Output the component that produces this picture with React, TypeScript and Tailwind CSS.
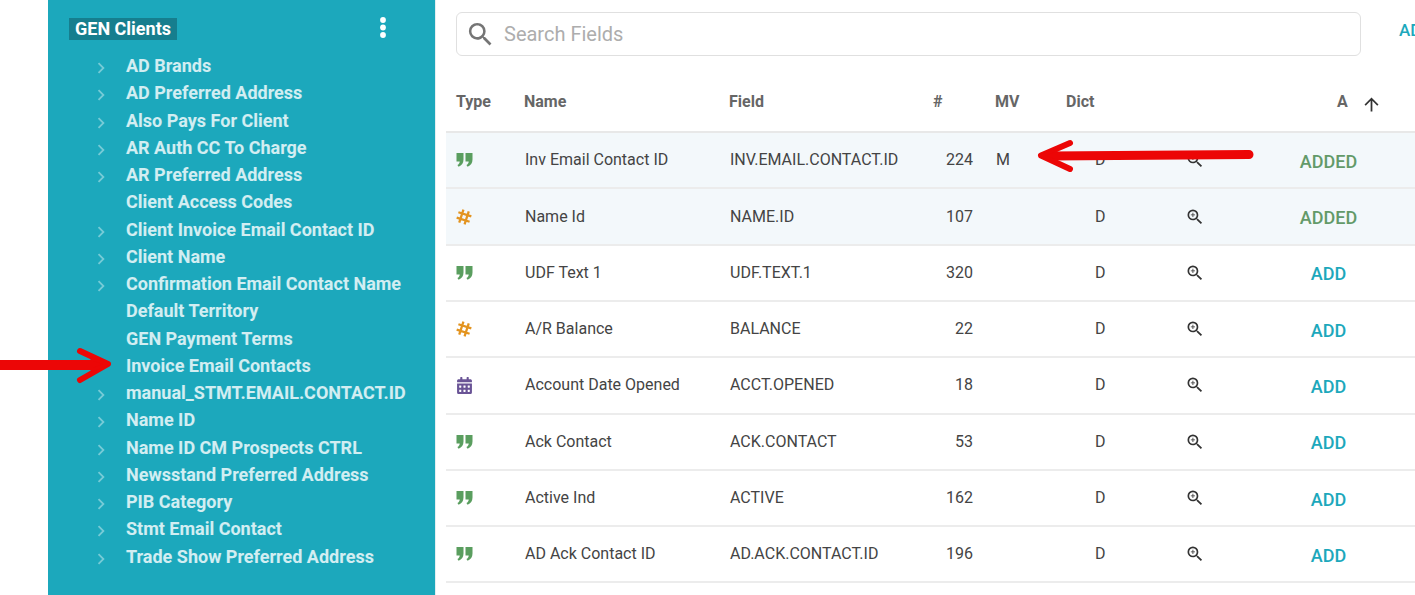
import { MdArrowUpward, MdChevronRight, MdSearch, MdZoomIn } from "react-icons/md"
import { FaCalendarAlt } from "react-icons/fa"

type FieldType = "text" | "number" | "date"

interface Row {
  type: FieldType
  name: string
  field: string
  num: number
  mv?: string
  added?: boolean
}

const clients: { label: string; expandable: boolean }[] = [
  { label: "AD Brands", expandable: true },
  { label: "AD Preferred Address", expandable: true },
  { label: "Also Pays For Client", expandable: true },
  { label: "AR Auth CC To Charge", expandable: true },
  { label: "AR Preferred Address", expandable: true },
  { label: "Client Access Codes", expandable: false },
  { label: "Client Invoice Email Contact ID", expandable: true },
  { label: "Client Name", expandable: true },
  { label: "Confirmation Email Contact Name", expandable: true },
  { label: "Default Territory", expandable: false },
  { label: "GEN Payment Terms", expandable: false },
  { label: "Invoice Email Contacts", expandable: false },
  { label: "manual_STMT.EMAIL.CONTACT.ID", expandable: true },
  { label: "Name ID", expandable: true },
  { label: "Name ID CM Prospects CTRL", expandable: true },
  { label: "Newsstand Preferred Address", expandable: true },
  { label: "PIB Category", expandable: true },
  { label: "Stmt Email Contact", expandable: true },
  { label: "Trade Show Preferred Address", expandable: true },
]

const rows: Row[] = [
  { type: "text", name: "Inv Email Contact ID", field: "INV.EMAIL.CONTACT.ID", num: 224, mv: "M", added: true },
  { type: "number", name: "Name Id", field: "NAME.ID", num: 107, added: true },
  { type: "text", name: "UDF Text 1", field: "UDF.TEXT.1", num: 320 },
  { type: "number", name: "A/R Balance", field: "BALANCE", num: 22 },
  { type: "date", name: "Account Date Opened", field: "ACCT.OPENED", num: 18 },
  { type: "text", name: "Ack Contact", field: "ACK.CONTACT", num: 53 },
  { type: "text", name: "Active Ind", field: "ACTIVE", num: 162 },
  { type: "text", name: "AD Ack Contact ID", field: "AD.ACK.CONTACT.ID", num: 196 },
]

const columns = "grid-cols-[69px_205px_203px_62px_71px_119px_83px_121px]"

function QuoteIcon() {
  return (
    <svg width="17" height="14" viewBox="0 0 17 14" className="text-[#5a9e5f]" fill="currentColor">
      <path d="M0.5 0h7v6.6C7.5 10 5.8 12.6 2.6 13.8L1.4 12c1.5-.8 2.2-2 2.3-3.6H.5z" />
      <path d="M9.5 0h7v6.6c0 3.4-1.7 6-4.9 7.2L10.4 12c1.5-.8 2.2-2 2.3-3.6H9.5z" />
    </svg>
  )
}

function HashIcon() {
  return (
    <svg width="16" height="16" viewBox="0 0 16 16" className="text-[#e39420]" fill="none" stroke="currentColor" strokeWidth="2.3">
      <g transform="rotate(18 8 8)">
        <path d="M5.2 1.2v13.6M10.8 1.2v13.6M1.2 5.2h13.6M1.2 10.8h13.6" />
      </g>
    </svg>
  )
}

function TypeIcon({ type }: { type: FieldType }) {
  if (type === "text") return <QuoteIcon />
  if (type === "number") return <HashIcon />
  return <FaCalendarAlt className="text-[#6a5496] text-[17px]" />
}

export default function App() {
  return (
    <div className="relative flex h-[595px] w-[1415px] overflow-hidden bg-white font-['Roboto',sans-serif]">
      <aside className="ml-12 w-[388px] shrink-0 bg-[#1ca8bc] border-r border-[#e3eef1]">
        <div className="flex h-[52px] items-start justify-between pl-[21px] pr-[49px] pt-[18px]">
          <span className="h-[22px] bg-[#167e8e] px-[6px] text-[18px] leading-[22px] font-bold text-white">GEN Clients</span>
          <svg width="6" height="22" viewBox="0 0 6 22" className="-mt-[1px] text-white" fill="currentColor">
            <circle cx="3" cy="3" r="2.9" />
            <circle cx="3" cy="10.5" r="2.9" />
            <circle cx="3" cy="18" r="2.9" />
          </svg>
        </div>
        <ul>
          {clients.map((c) => (
            <li key={c.label} className="flex h-[27.25px] items-center">
              <span className="flex w-[78px] shrink-0 justify-end pr-[14px] pt-[5px]">
                {c.expandable && <MdChevronRight className="text-[22px] text-white/40" />}
              </span>
              <span className="text-[18px] font-bold whitespace-nowrap text-white/80">{c.label}</span>
            </li>
          ))}
        </ul>
      </aside>

      <main className="flex-1 min-w-0 pl-[10px]">
        <div className="flex h-[76px] items-start pl-[10px] pt-3">
          <div className="flex h-11 w-[905px] shrink-0 items-center rounded-md border border-[#e0e0e0] pl-[8px]">
            <MdSearch className="text-[31px] text-[#757575]" />
            <span className="ml-[8px] text-[20px] text-[#adadad]">Search Fields</span>
          </div>
          <span className="ml-[38px] pt-[6px] text-[17px] font-medium text-[#1ca8bc]">ADD</span>
        </div>

        <div className={`grid h-[57.1px] ${columns} items-center border-b-2 border-[#e8e8e8] pb-[4px] pl-[10px] text-[16px] font-bold text-[#666]`}>
          <span>Type</span>
          <span className="-ml-px">Name</span>
          <span className="-ml-px">Field</span>
          <span>#</span>
          <span>MV</span>
          <span>Dict</span>
          <span />
          <span className="flex items-center pl-[69px]">
            A
            <MdArrowUpward className="ml-[13px] mt-[6px] shrink-0 text-[21px] text-[#333]" />
          </span>
        </div>

        {rows.map((r) => (
          <div
            key={r.field}
            className={`grid h-[56.3px] ${columns} items-center border-b-2 border-[#ececec] pl-[10px] text-[16px] text-[#444] ${
              r.added ? "bg-[#f3f8fb]" : "bg-white"
            }`}
          >
            <span className="flex items-center">
              <TypeIcon type={r.type} />
            </span>
            <span>{r.name}</span>
            <span>{r.field}</span>
            <span className="pr-[22px] text-right">{r.num}</span>
            <span className="pl-px">{r.mv}</span>
            <span className="pl-[29px]">D</span>
            <span className="flex">
              <MdZoomIn className="text-[20px] text-[#333]" />
            </span>
            <span
              className={`pt-[2px] text-center text-[18px] font-medium ${r.added ? "text-[#639a69]" : "text-[#1ca8bc]"}`}
            >
              {r.added ? "ADDED" : "ADD"}
            </span>
          </div>
        ))}
      </main>

      {/* annotation arrows pasted over the screenshot */}
      <svg className="absolute left-0 top-0 pointer-events-none" width="1415" height="595" fill="none" stroke="#ec0606" strokeLinecap="round" strokeLinejoin="round">
        <path d="M1249 154.5 L1050 156" strokeWidth="9" />
        <path d="M1070 143 L1041 155.5 L1070 169" strokeWidth="6" />
        <path d="M1041 155.5 L1056 150 L1056 161 Z" strokeWidth="3" fill="#ec0606" />
        <path d="M0 365 L100 365" strokeWidth="10" strokeLinecap="butt" />
        <path d="M80 351 L108 364 L80 380" strokeWidth="6" />
        <path d="M108 364 L92 359 L92 370 Z" strokeWidth="3" fill="#ec0606" />
      </svg>
    </div>
  )
}
